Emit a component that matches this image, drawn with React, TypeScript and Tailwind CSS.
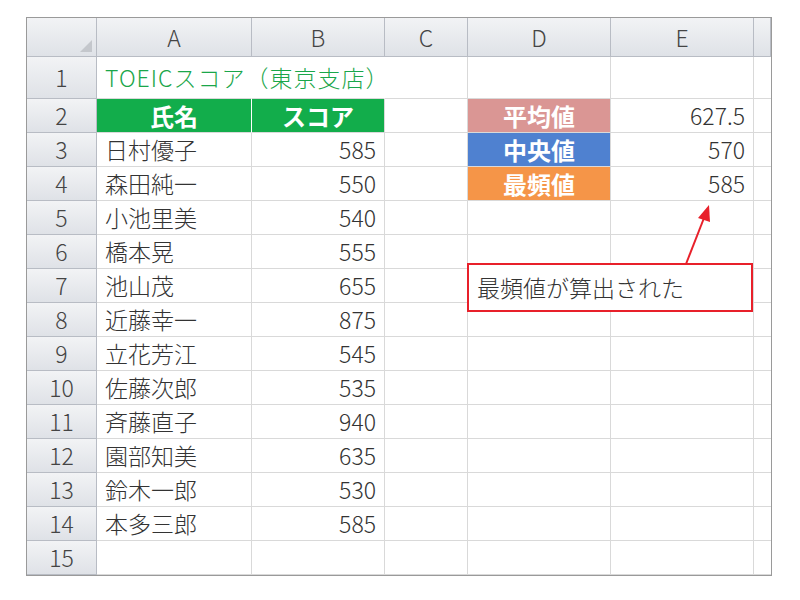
const names: [string, string][] = [
  ["日村優子", "585"],
  ["森田純一", "550"],
  ["小池里美", "540"],
  ["橋本晃", "555"],
  ["池山茂", "655"],
  ["近藤幸一", "875"],
  ["立花芳江", "545"],
  ["佐藤次郎", "535"],
  ["斉藤直子", "940"],
  ["園部知美", "635"],
  ["鈴木一郎", "530"],
  ["本多三郎", "585"],
];

const stats: Record<number, [string, string, string]> = {
  2: ["平均値", "627.5", "bg-[#da9694]"],
  3: ["中央値", "570", "bg-[#4f81d0]"],
  4: ["最頻値", "585", "bg-[#f59548]"],
};

const cell = "border-r border-b border-[#d9d9d9] flex items-center px-2";
const head = "border-r border-b border-[#b8bcc4] bg-gradient-to-b from-[#f2f3f5] to-[#dfe2e7] flex items-center justify-center text-[#444]";

function Row({ n }: { n: number }) {
  const h = n === 1 ? "h-[42px]" : "h-[34px]";
  let a: React.ReactNode = null;
  let b: React.ReactNode = null;
  let aCls = "";
  let bCls = "";
  if (n === 1) {
    a = <span className="whitespace-nowrap text-[#1aa64a] tracking-[1px]">TOEICスコア（東京支店）</span>;
  } else if (n === 2) {
    a = "氏名";
    b = "スコア";
    aCls = "bg-[#12ad4b] text-white font-bold justify-center border-r-white text-[24px]";
    bCls = "bg-[#12ad4b] text-white font-bold justify-center text-[24px]";
  } else if (n <= 14) {
    a = names[n - 3][0];
    b = names[n - 3][1];
    bCls = "justify-end";
  }
  const s = stats[n];
  return (
    <>
      <div className={`${head} ${h}`}>{n}</div>
      <div className={`${cell} ${h} ${aCls} overflow-visible ${n === 1 ? "border-r-transparent" : ""}`}>{a}</div>
      <div className={`${cell} ${h} ${bCls} ${n === 1 ? "border-r-transparent" : ""}`}>{b}</div>
      <div className={`${cell} ${h}`}></div>
      <div className={`${cell} ${h} ${s ? `${s[2]} text-white font-bold justify-center text-[24px]` : ""}`}>{s?.[0]}</div>
      <div className={`${cell} ${h} justify-end`}>{s?.[1]}</div>
      <div className={`${cell} ${h} border-r-0`}></div>
    </>
  );
}

export default function App() {
  return (
    <div className="w-[800px] h-[600px] bg-white relative" style={{ fontFamily: '"Noto Sans CJK JP", "Liberation Sans", sans-serif' }}>
      <div className="absolute left-[26px] top-[17px] w-[746px] border border-[#9a9a9a] text-[23px] font-light text-[#333] leading-none">
        <div className="grid grid-cols-[70px_155px_133px_83px_143px_143px_17px]">
          <div className={`${head} h-[39px] justify-end items-end p-1`}>
            <svg width="12" height="12" viewBox="0 0 12 12"><polygon points="12,0 12,12 0,12" fill="#c4c7cc" /></svg>
          </div>
          {["A", "B", "C", "D", "E", ""].map((c) => (
            <div key={c} className={`${head} h-[39px]`}>{c}</div>
          ))}
          {Array.from({ length: 15 }, (_, i) => (
            <Row key={i} n={i + 1} />
          ))}
        </div>
      </div>
      <svg className="absolute left-0 top-0" width="800" height="600">
        <line x1="686" y1="264" x2="704" y2="218" stroke="#e8202a" strokeWidth="2" />
        <polygon points="709,205 698,218 710,222" fill="#e8202a" />
      </svg>
      <div className="absolute left-[467px] top-[263px] w-[286px] h-[49px] border-2 border-[#e8202a] bg-white flex items-center px-2 text-[23px] font-light text-[#333]">
        最頻値が算出された
      </div>
    </div>
  );
}
